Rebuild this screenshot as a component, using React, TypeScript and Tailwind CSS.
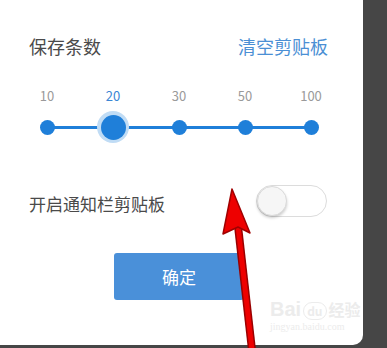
import React from 'react';

const font = { fontFamily: '"Noto Sans CJK SC", "Noto Sans", sans-serif' };

const steps = ['10', '20', '30', '50', '100'];

export default function App() {
  return (
    <div className="relative flex h-[348px] w-[387px] overflow-hidden bg-[#464646]" style={font}>
      <div className="relative h-[345px] w-[363px] rounded-br-[10px] bg-white">
        {/* header row */}
        <div className="flex items-center justify-between pl-[29px] pr-[35px] pt-[36px]">
          <span className="text-[18px] leading-[21px] text-[#4a4a4a]">保存条数</span>
          <span className="text-[18px] leading-[21px] text-[#4b8fd4]">清空剪贴板</span>
        </div>

        {/* slider labels */}
        <div className="mt-[31px] grid w-[330px] grid-cols-5 pl-[14px] box-content">
          {steps.map((s, i) => (
            <span
              key={s}
              className={`text-center text-[13px] leading-[16px] ${i === 1 ? 'text-[#3b86d4]' : 'text-[#9a9a9a]'}`}
            >
              {s}
            </span>
          ))}
        </div>

        {/* slider track */}
        <div className="relative mt-[7px] ml-[14px] grid h-[32px] w-[330px] grid-cols-5">
          <div className="absolute left-[33px] right-[33px] top-[15px] h-[3px] bg-[#1f7fd9]" />
          {steps.map((s, i) => (
            <div key={s} className="relative flex items-center justify-center">
              {i === 1 ? (
                <div className="flex h-[32px] w-[32px] items-center justify-center rounded-full bg-[#c0dcf5]">
                  <div className="h-[25px] w-[25px] rounded-full bg-[#1f7fd9]" />
                </div>
              ) : (
                <div className="h-[15px] w-[15px] rounded-full bg-[#1f7fd9]" />
              )}
            </div>
          ))}
        </div>

        {/* notification toggle */}
        <div className="mt-[42px] flex h-[32px] items-center justify-between pl-[29px] pr-[36px]">
          <span className="mt-[6px] text-[17px] leading-[20px] text-[#4a4a4a]">开启通知栏剪贴板</span>
          <div className="relative h-[32px] w-[71px] rounded-full border border-[#dcdcdc] bg-white">
            <div className="absolute left-0 top-0 h-[30px] w-[30px] rounded-full border border-[#dadada] bg-[#f6f6f6] shadow-[0_2px_3px_rgba(0,0,0,0.2)]" />
          </div>
        </div>

        {/* confirm */}
        <div className="mt-[36px] pl-[114px]">
          <button className="h-[47px] w-[130px] rounded-[3px] bg-[#4a90d9] text-[17px] text-white">确定</button>
        </div>

        {/* watermark */}
        <div className="pointer-events-none absolute left-[270px] top-[298px] flex flex-col items-start">
          <div className="flex items-end text-[20px] font-bold leading-[22px] text-[#ececec]">
            <span style={{ fontFamily: '"Liberation Sans", sans-serif' }}>Bai</span>
            <span className="mx-[2px] rounded-full border border-[#ececec] px-[3px] text-[12px] leading-[16px]">du</span>
            <span className="text-[16px]">经验</span>
          </div>
          <span className="text-[10px] leading-[14px] text-[#ececec]" style={{ fontFamily: '"Liberation Serif", serif' }}>
            jingyan.baidu.com
          </span>
        </div>
      </div>

      {/* red arrow annotation */}
      <svg className="pointer-events-none absolute left-0 top-0" width="387" height="348" viewBox="0 0 387 348">
        <line x1="238" y1="226" x2="252" y2="350" stroke="#9a0000" strokeWidth="8" />
        <line x1="238" y1="226" x2="252" y2="350" stroke="#ee0000" strokeWidth="5" />
        <polygon points="232,189 223,234 238,227 250,233" fill="#ee0000" stroke="#a00000" strokeWidth="1.5" strokeLinejoin="round" />
      </svg>
    </div>
  );
}
